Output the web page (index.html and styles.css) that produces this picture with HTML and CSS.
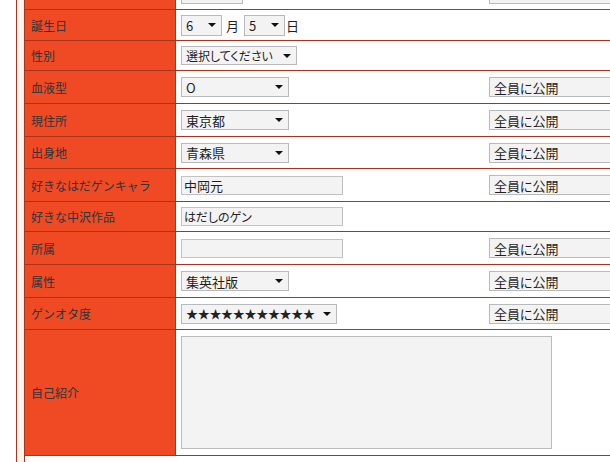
FILE: index.html
```html
<!DOCTYPE html>
<html lang="ja">
<head>
<meta charset="utf-8">
<title>プロフィール編集</title>
<link rel="stylesheet" href="styles.css">
</head>
<body>
<div class="page">
  <div class="frame">
    <div class="inner">
      <div class="form">
        <div class="row h31">
          <div class="lab"></div>
          <div class="val"><span class="sel w62"></span></div>
          <div class="pub"><span class="sel pubsel"></span></div>
        </div>
        <div class="row h31">
          <div class="lab">誕生日</div>
          <div class="val"><span class="sel w41 tall">6</span><span class="unit u1">月</span><span class="sel w41 tall">5</span><span class="unit u2">日</span></div>
          <div class="pub"></div>
        </div>
        <div class="row h30">
          <div class="lab">性別</div>
          <div class="val"><span class="sel w116 short palt">選択してください</span></div>
          <div class="pub"></div>
        </div>
        <div class="row h33">
          <div class="lab">血液型</div>
          <div class="val"><span class="sel w108">O</span></div>
          <div class="pub"><span class="sel pubsel">全員に公開</span></div>
        </div>
        <div class="row h33">
          <div class="lab">現住所</div>
          <div class="val"><span class="sel w108">東京都</span></div>
          <div class="pub"><span class="sel pubsel">全員に公開</span></div>
        </div>
        <div class="row h32">
          <div class="lab">出身地</div>
          <div class="val"><span class="sel w108">青森県</span></div>
          <div class="pub"><span class="sel pubsel">全員に公開</span></div>
        </div>
        <div class="row h33">
          <div class="lab">好きなはだゲンキャラ</div>
          <div class="val"><span class="txt">中岡元</span></div>
          <div class="pub"><span class="sel pubsel">全員に公開</span></div>
        </div>
        <div class="row h30">
          <div class="lab">好きな中沢作品</div>
          <div class="val"><span class="txt palt">はだしのゲン</span></div>
          <div class="pub"></div>
        </div>
        <div class="row h33">
          <div class="lab">所属</div>
          <div class="val"><span class="txt"></span></div>
          <div class="pub"><span class="sel pubsel">全員に公開</span></div>
        </div>
        <div class="row h33">
          <div class="lab">属性</div>
          <div class="val"><span class="sel w108">集英社版</span></div>
          <div class="pub"><span class="sel pubsel">全員に公開</span></div>
        </div>
        <div class="row h32">
          <div class="lab">ゲンオタ度</div>
          <div class="val"><span class="sel w156"><span class="stars">★★★★★★★★★★★</span></span></div>
          <div class="pub"><span class="sel pubsel">全員に公開</span></div>
        </div>
        <div class="row h126">
          <div class="lab">自己紹介</div>
          <div class="val wide"><span class="area"></span></div>
        </div>
      </div>
    </div>
  </div>
</div>
</body>
</html>
```

FILE: styles.css
```css
html, body {
  margin: 0;
  padding: 0;
  overflow: hidden;
  background: #ffffff;
}

.page {
  width: 610px;
  height: 462px;
  overflow: hidden;
  padding-left: 16px;
  box-sizing: border-box;
  font-family: "Noto Sans CJK JP", "Noto Sans", sans-serif;
  font-size: 12px;
}

.frame {
  border-left: 1px solid #a9331f;
  background: #faf6ee;
  padding-left: 7px;
  height: 462px;
  overflow: hidden;
}

.inner {
  border-left: 1px solid #a9331f;
  background: #ffffff;
  height: 462px;
  width: 700px;
  overflow: hidden;
}

.form {
  margin-top: -21px;
}

.row {
  display: grid;
  grid-template-columns: 151px 308px 1fr;
  border-bottom: 1px solid #a9331f;
  box-sizing: border-box;
}

.h30 { height: 30px; }
.h31 { height: 31px; }
.h32 { height: 32px; }
.h33 { height: 33px; }
.h126 { height: 126px; }

.lab {
  background: #f04a24;
  border-right: 1px solid #a9331f;
  color: #2b363b;
  display: flex;
  align-items: center;
  padding-left: 6px;
  white-space: nowrap;
  font-size: 12px;
}

.val, .pub {
  display: flex;
  align-items: center;
  padding-left: 5px;
}

.val.wide {
  grid-column: 2 / 4;
}

.sel {
  position: relative;
  display: inline-flex;
  align-items: center;
  box-sizing: border-box;
  height: 20px;
  border: 1px solid #b6babd;
  background: #f3f3f3;
  color: #1f1f1f;
  font-size: 13px;
  padding-left: 4px;
  line-height: 1;
  white-space: nowrap;
  font-feature-settings: "palt";
}

.sel::after {
  content: "";
  position: absolute;
  right: 5px;
  top: 50%;
  margin-top: -2px;
  border-top: 4px solid #111;
  border-left: 4px solid transparent;
  border-right: 4px solid transparent;
}

.sel.tall { height: 21px; }
.sel.short { height: 19px; }

.w41 { width: 41px; }
.w62 { width: 62px; }
.w108 { width: 108px; }
.w116 { width: 116px; }
.w156 { width: 156px; }

.pubsel {
  width: 150px;
}

.pubsel::after {
  display: none;
}

.palt {
  font-feature-settings: "palt";
  font-size: 12px;
}

.unit {
  color: #1f1f1f;
  font-size: 13px;
}

.u1 { margin: 0 5px 0 4px; }
.u2 { margin-left: 1px; }

.stars {
  font-size: 12px;
  letter-spacing: -0.3px;
  color: #222;
}

.txt {
  display: inline-flex;
  align-items: center;
  box-sizing: border-box;
  width: 162px;
  height: 19px;
  border: 1px solid #bfc3c5;
  background: #f3f3f3;
  color: #1f1f1f;
  font-size: 13px;
  padding-left: 2px;
  line-height: 1;
  white-space: nowrap;
}

.txt.palt {
  font-size: 12px;
}

.area {
  display: block;
  box-sizing: border-box;
  width: 371px;
  height: 113px;
  border: 1px solid #b8bcbe;
  background: #f3f3f3;
}
```
